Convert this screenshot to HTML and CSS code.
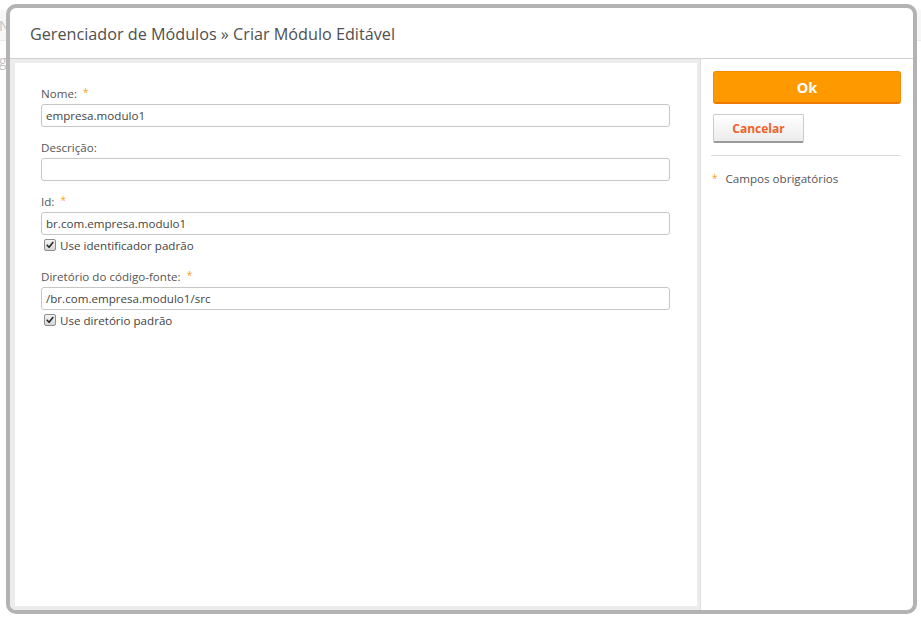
FILE: index.html
```html
<!DOCTYPE html>
<html lang="pt-BR">
<head>
<meta charset="utf-8">
<title>Criar Módulo Editável</title>
<link rel="stylesheet" href="styles.css">
</head>
<body>
<div class="page">
  <div class="page-bar"><span class="page-text">No</span></div>
  <div class="page-line"><span class="page-text">gis</span></div>
</div>

<div class="dialog">
  <div class="dialog-header">Gerenciador de Módulos » Criar Módulo Editável</div>
  <div class="dialog-body">
    <div class="form-panel">
      <div class="form-inner">
        <div class="field">
          <div class="label">Nome: <span class="req">*</span></div>
          <div class="input">empresa.modulo1</div>
        </div>
        <div class="field">
          <div class="label">Descrição:</div>
          <div class="input"></div>
        </div>
        <div class="field field-check">
          <div class="label">Id: <span class="req">*</span></div>
          <div class="input">br.com.empresa.modulo1</div>
          <div class="check-row">
            <span class="checkbox"><svg viewBox="0 0 12 12" width="12" height="12"><path d="M2.6 6.2 L4.9 8.6 L9.4 2.9" fill="none" stroke="#222" stroke-width="1.8" stroke-linecap="round" stroke-linejoin="round"/></svg></span>
            <span>Use identificador padrão</span>
          </div>
        </div>
        <div class="field field-check">
          <div class="label">Diretório do código-fonte: <span class="req">*</span></div>
          <div class="input">/br.com.empresa.modulo1/src</div>
          <div class="check-row">
            <span class="checkbox"><svg viewBox="0 0 12 12" width="12" height="12"><path d="M2.6 6.2 L4.9 8.6 L9.4 2.9" fill="none" stroke="#222" stroke-width="1.8" stroke-linecap="round" stroke-linejoin="round"/></svg></span>
            <span>Use diretório padrão</span>
          </div>
        </div>
      </div>
    </div>
    <div class="side-panel">
      <button class="btn-ok">Ok</button>
      <button class="btn-cancel">Cancelar</button>
      <div class="side-sep"></div>
      <div class="side-note"><span class="req">*</span><span>Campos obrigatórios</span></div>
    </div>
  </div>
</div>
</body>
</html>
```

FILE: styles.css
```css
* { box-sizing: border-box; }
html, body {
  margin: 0;
  padding: 0;
  background: #ffffff;
  font-family: "Open Sans", "Noto Sans", sans-serif;
  width: 921px;
  height: 618px;
  overflow: hidden;
}

.page {
  padding-top: 10px;
}
.page-bar {
  height: 31px;
  background: #f7f7f7;
  border-bottom: 1px solid #ececec;
  display: flex;
  align-items: center;
}
.page-line {
  height: 30px;
  display: flex;
  align-items: center;
  margin-top: 4px;
}
.page-text {
  color: #c4c4c4;
  font-size: 14px;
  margin-left: -1px;
}

.dialog {
  position: absolute;
  left: 6px;
  top: 4px;
  width: 911px;
  height: 610px;
  border: 4px solid #b3b3b3;
  border-radius: 10px;
  background: #ffffff;
  display: flex;
  flex-direction: column;
  overflow: hidden;
}

.dialog-header {
  height: 51px;
  flex: none;
  padding-left: 20px;
  display: flex;
  align-items: center;
  font-size: 16.2px;
  color: #505050;
  border-bottom: 1px solid #d0d0d0;
  padding-top: 1px;
}

.dialog-body {
  flex: 1;
  display: flex;
  min-height: 0;
}

.form-panel {
  width: 691px;
  flex: none;
  background: #ececec;
  padding: 4px 3px 4px 5px;
  border-right: 1px solid #dedede;
}
.form-inner {
  background: #ffffff;
  height: 100%;
  padding: 23px 27px 0 26px;
}

.field {
  margin-bottom: 13px;
}
.field-check {
  margin-bottom: 15px;
}
.label {
  font-size: 11.6px;
  line-height: 16px;
  color: #555555;
  margin-bottom: 2px;
}
.req {
  color: #f7a21b;
  font-size: 10px;
  margin-left: 3px;
  position: relative;
  top: -2px;
}
.input {
  height: 23px;
  border: 1px solid #c6c6c6;
  border-radius: 3px;
  font-size: 11.6px;
  line-height: 21px;
  padding-left: 4px;
  color: #444444;
}
.check-row {
  display: flex;
  align-items: center;
  height: 18px;
  margin-top: 1px;
  padding-left: 3px;
  font-size: 11.6px;
  color: #444444;
  gap: 4px;
}
.checkbox {
  width: 12px;
  height: 12px;
  border: 1px solid #8e8e8e;
  border-radius: 2px;
  background: linear-gradient(#f4f4f4, #d6d6d6);
  display: flex;
  align-items: center;
  justify-content: center;
}
.checkbox svg {
  display: block;
  width: 10px;
  height: 10px;
}

.side-panel {
  flex: 1;
  padding: 12px 12px 0 11px;
  display: flex;
  flex-direction: column;
  align-items: flex-start;
}
.btn-ok {
  width: 188px;
  height: 33px;
  background: #ff9900;
  border: 1px solid #f58a00;
  border-bottom: 2px solid #f07800;
  border-radius: 3px;
  color: #ffffff;
  font-family: "Open Sans", "Noto Sans", sans-serif;
  font-weight: 700;
  font-size: 14.5px;
  padding: 0;
  margin: 0 0 0 1px;
}
.btn-cancel {
  margin: 10px 0 0 1px;
  width: 91px;
  height: 29px;
  background: linear-gradient(#ffffff, #ececec);
  border: 1px solid #cccccc;
  border-bottom: 2px solid #9a9a9a;
  border-radius: 2px;
  color: #f0622a;
  font-family: "Open Sans", "Noto Sans", sans-serif;
  font-weight: 700;
  font-size: 12px;
  padding: 0;
}
.side-sep {
  align-self: stretch;
  margin: 12px 0 0 -1px;
  height: 1px;
  background: #dcdcdc;
}
.side-note {
  margin-top: 15px;
  display: flex;
  align-items: center;
  font-size: 11.6px;
  color: #555555;
}
.side-note .req {
  margin-left: 0;
  margin-right: 8px;
  top: -1px;
}
```
